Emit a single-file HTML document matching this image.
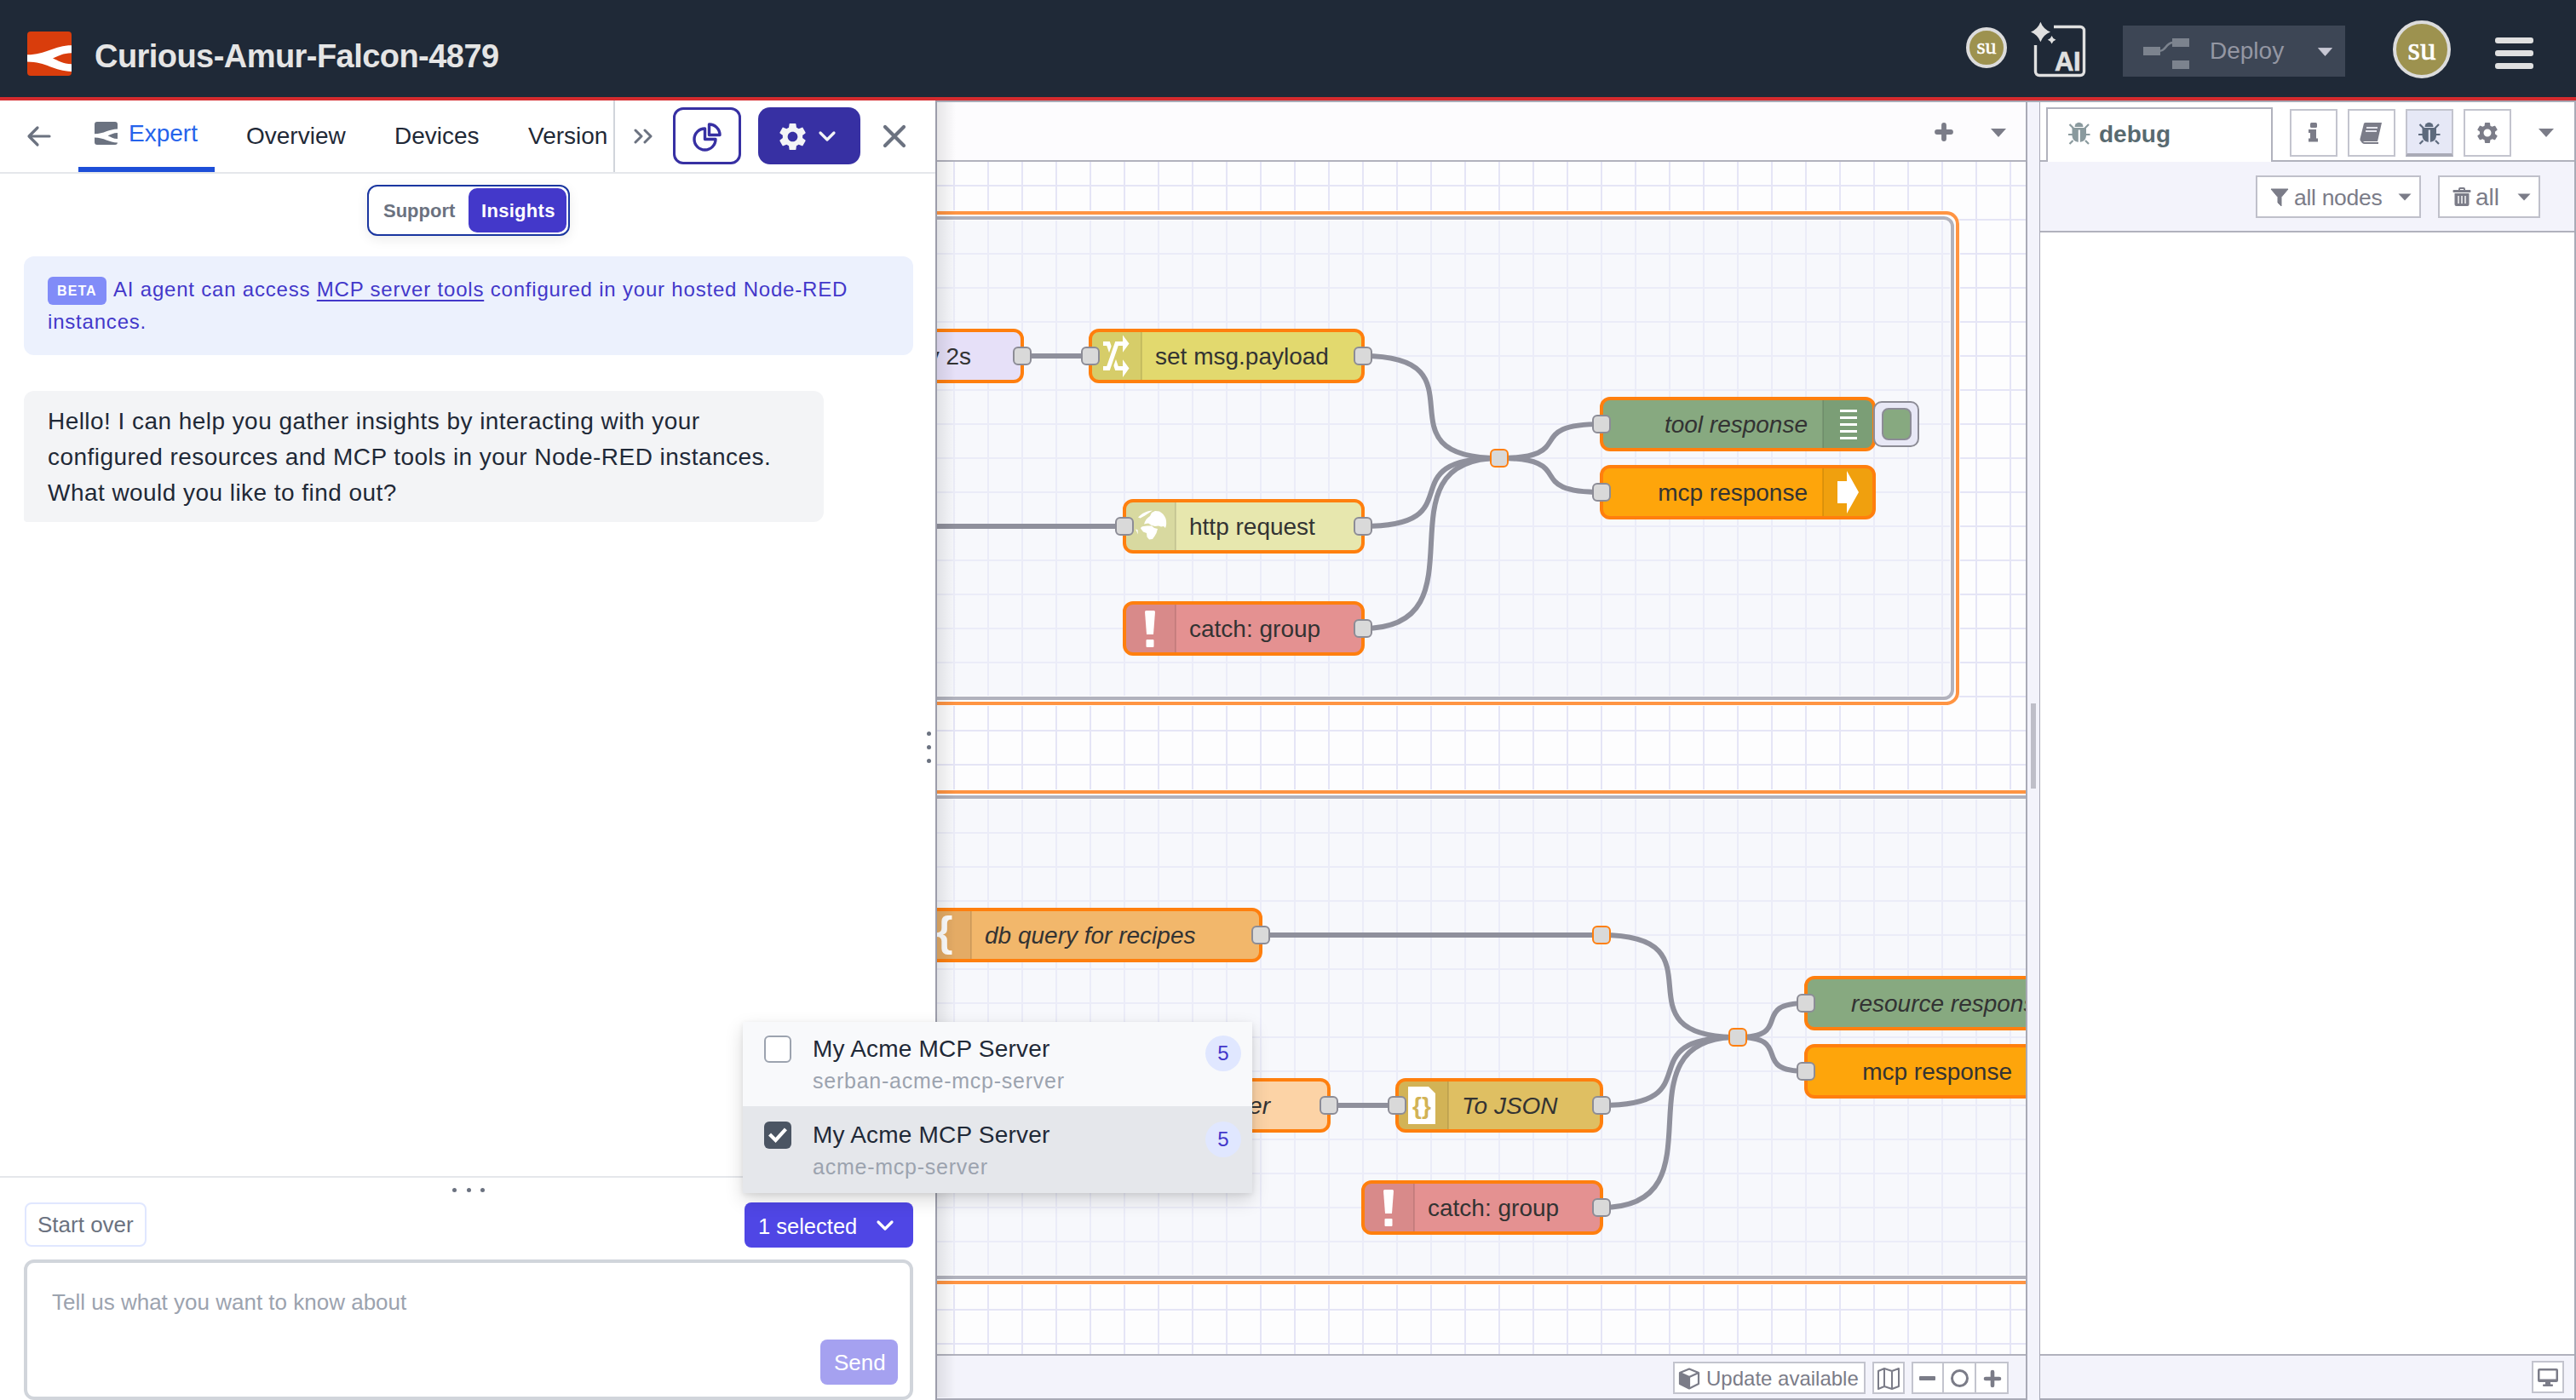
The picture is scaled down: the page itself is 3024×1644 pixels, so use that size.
<!DOCTYPE html>
<html><head><meta charset="utf-8">
<style>
.rbtn{width:56px;height:56px;background:#fff;border:2px solid #c3c4ce}

.port{fill:#d9d9d9;stroke:#8c8c96;stroke-width:2}

*{box-sizing:border-box;margin:0;padding:0}
html,body{width:3024px;height:1644px;overflow:hidden;background:#fff;font-family:"Liberation Sans",sans-serif}
.abs{position:absolute}
#hdr{position:absolute;left:0;top:0;width:3024px;height:114px;background:#1f2937}
#redl{position:absolute;left:0;top:114px;width:3024px;height:4px;background:#d52b2e}
#left{position:absolute;left:0;top:118px;width:1098px;height:1526px;background:#fff}
#leftb{position:absolute;left:1098px;top:118px;width:2px;height:1526px;background:#9c9daa}
.tab{position:absolute;top:142px;font-size:28px;color:#1f2937;line-height:40px;white-space:nowrap}
</style></head><body>
<!-- HEADER -->
<div id="hdr">
  <svg class="abs" style="left:32px;top:37px" width="52" height="52" viewBox="0 0 52 52">
    <rect width="52" height="52" rx="4" fill="#d93d0c"/>
    <path d="M0,27.3 C22,27.3 32,16.3 52,16.3 L52,25.2 C42,25.2 36,29 30,31.5 C36,34 42,38.3 52,38.3 L52,46.9 C32,46.9 22,35.6 0,35.6 Z" fill="#fff"/>
  </svg>
  <div class="abs" style="left:111px;top:36px;font-size:38px;font-weight:bold;color:#e5e5e5;letter-spacing:-0.55px;line-height:60px;white-space:nowrap">Curious-Amur-Falcon-4879</div>

  <div class="abs" style="left:2308px;top:32px;width:48px;height:48px;border-radius:50%;background:#9d924f;border:4px solid #dcdcdc"></div>
  <div class="abs" style="left:2308px;top:32px;width:48px;height:48px;text-align:center;font-family:'Liberation Serif',serif;font-size:26px;color:#fff;line-height:46px;-webkit-text-stroke:0.5px #fff">su</div>
  <svg class="abs" style="left:2380px;top:24px" width="72" height="70" viewBox="2380 24 72 70">
    <path d="M2411,31.5 H2442 A4.5,4.5 0 0 1 2446.5,36 V84 A4.5,4.5 0 0 1 2442,88.5 H2394 A4.5,4.5 0 0 1 2389.5,84 V53" fill="none" stroke="#e0e0e0" stroke-width="3.4"/>
    <path d="M2395.4,25.8 Q2398.6,34.3 2407,37.5 Q2398.6,40.7 2395.4,49.3 Q2392.2,40.7 2384,37.5 Q2392.2,34.3 2395.4,25.8 Z" fill="#e0e0e0"/>
    <path d="M2408.6,42 Q2409.8,45.6 2413.4,46.8 Q2409.8,48 2408.6,51.6 Q2407.4,48 2403.8,46.8 Q2407.4,45.6 2408.6,42 Z" fill="#e0e0e0"/>
    <text x="2412" y="83" font-family="Liberation Sans" font-weight="bold" font-size="31" fill="#e0e0e0" stroke="#e0e0e0" stroke-width="0.6" letter-spacing="-0.5">AI</text>
  </svg>
  <div class="abs" style="left:2492px;top:30px;width:261px;height:60px;background:#3d4655"></div>
  <svg class="abs" style="left:2510px;top:40px" width="66" height="46" viewBox="2510 40 66 46">
    <rect x="2516" y="55" width="20" height="10" fill="#7c838e"/>
    <rect x="2550" y="45" width="20" height="10" fill="#7c838e"/>
    <rect x="2550" y="71" width="20" height="10" fill="#7c838e"/>
    <path d="M2535,60 C2543,60 2542,50 2551,50" fill="none" stroke="#7c838e" stroke-width="2.6"/>
  </svg>
  <div class="abs" style="left:2594px;top:40px;font-size:28px;color:#9497a3;line-height:40px">Deploy</div>
  <svg class="abs" style="left:2721px;top:56px" width="17" height="10" viewBox="0 0 17 10"><path d="M0.5,0.5 H16.5 L8.5,9.5 Z" fill="#c8c8d4" stroke="#c8c8d4" stroke-width="0.8" stroke-linejoin="round"/></svg>
  <div class="abs" style="left:2809px;top:24px;width:68px;height:68px;border-radius:50%;background:#9d924f;border:4px solid #dcdcdc"></div>
  <div class="abs" style="left:2809px;top:24px;width:68px;height:68px;text-align:center;font-family:'Liberation Serif',serif;font-size:37px;color:#fff;line-height:68px;-webkit-text-stroke:0.7px #fff">su</div>
  <div class="abs" style="left:2929px;top:44px;width:45px;height:7px;border-radius:3px;background:#e0e0e0"></div>
  <div class="abs" style="left:2929px;top:59px;width:45px;height:7px;border-radius:3px;background:#e0e0e0"></div>
  <div class="abs" style="left:2929px;top:74px;width:45px;height:7px;border-radius:3px;background:#e0e0e0"></div>
</div>
<div id="redl"></div>


<!-- CANVAS -->
<div class="abs" style="left:1100px;top:118px;width:1279px;height:72px;background:#fdfcfe;border-bottom:2px solid #b1b2bd"></div>
<svg class="abs" style="left:2268px;top:141px" width="28" height="28" viewBox="0 0 28 28"><path d="M14,6 V22 M6,14 H22" stroke="#7b7c88" stroke-width="5.8" stroke-linecap="round"/></svg>
<svg class="abs" style="left:2336px;top:150px" width="20" height="12" viewBox="0 0 20 12"><path d="M1,1 H19 L10,11 Z" fill="#7b7c88"/></svg>
<div class="abs" style="left:1100px;top:190px;width:1279px;height:1400px;overflow:hidden">
<svg width="1279" height="1400" viewBox="1100 190 1279 1400" style="display:block">
<defs>
<pattern id="grid" patternUnits="userSpaceOnUse" x="1119" y="217" width="40" height="40">
<rect x="0" y="0" width="2" height="40" fill="#e5e5f6"/><rect x="0" y="0" width="40" height="2" fill="#e5e5f6"/>
</pattern>
<linearGradient id="lsh" x1="0" x2="1" y1="0" y2="0"><stop offset="0" stop-color="#000" stop-opacity="0.09"/><stop offset="1" stop-color="#000" stop-opacity="0"/></linearGradient>
</defs>
<rect x="1100" y="190" width="1279" height="1400" fill="#fdfdfe"/>
<rect x="1100" y="190" width="1279" height="1400" fill="url(#grid)"/>
<rect x="1000" y="256" width="1292" height="564" rx="10" fill="rgba(241,243,250,0.5)"/>
<rect x="1000" y="936" width="1500" height="564" rx="10" fill="rgba(241,243,250,0.5)"/>
<rect x="997" y="253" width="1298" height="570" rx="11.5" fill="none" stroke="#fdfdfe" stroke-width="12"/>
<rect x="997" y="933" width="1506" height="570" rx="11.5" fill="none" stroke="#fdfdfe" stroke-width="12"/>
<rect x="1000" y="256" width="1292" height="564" rx="10" fill="none" stroke="#b1b2bd" stroke-width="4"/>
<rect x="994" y="250" width="1304" height="576" rx="13" fill="none" stroke="#ff9442" stroke-width="4"/>
<rect x="1000" y="936" width="1500" height="564" rx="10" fill="none" stroke="#b1b2bd" stroke-width="4"/>
<rect x="994" y="930" width="1512" height="576" rx="13" fill="none" stroke="#ff9442" stroke-width="4"/>
<g fill="none" stroke="#8f909c" stroke-width="6">
<path d="M1200,418 C1260.0,418 1220.0,418 1280,418"/>
<path d="M1000,618 C1150.0,618 1170.0,618 1320,618"/>
<path d="M1600,418 C1750.0,418 1610.0,538 1760,538"/>
<path d="M1600,618 C1734.2,618 1625.8,538 1760,538"/>
<path d="M1600,738 C1750.0,738 1610.0,538 1760,538"/>
<path d="M1760,538 C1854.9,538 1785.1,498 1880,498"/>
<path d="M1760,538 C1854.9,538 1785.1,578 1880,578"/>
<path d="M1480,1098 C1630.0,1098 1730.0,1098 1880,1098"/>
<path d="M1880,1098 C2030.0,1098 1890.0,1218 2040,1218"/>
<path d="M1560,1298 C1620.0,1298 1580.0,1298 1640,1298"/>
<path d="M1880,1298 C2014.2,1298 1905.8,1218 2040,1218"/>
<path d="M1880,1418 C2030.0,1418 1890.0,1218 2040,1218"/>
<path d="M2040,1218 C2107.1,1218 2052.9,1178 2120,1178"/>
<path d="M2040,1218 C2107.1,1218 2052.9,1258 2120,1258"/>
</g>
<g font-family="Liberation Sans" font-size="28" fill="#333">
<rect x="1000" y="388" width="200" height="60" rx="10" fill="#e6e0f8"/>

<rect x="1000" y="388" width="200" height="60" rx="10" fill="none" stroke="#ff7f0e" stroke-width="4"/>
<text x="1140" y="428" text-anchor="end">delay 2s</text>
<rect class="port" x="1190" y="408" width="20" height="20" rx="5"/>
<rect x="1280" y="388" width="320" height="60" rx="10" fill="#e2d96e"/>
<path d="M1290,388 H1340 V448 H1290 A10,10 0 0 1 1280,438 V398 A10,10 0 0 1 1290,388 Z" fill="#d6cd69"/>
<rect x="1339" y="388" width="2" height="60" fill="rgba(0,0,0,0.1)"/>
<g fill="none" stroke-linejoin="miter" stroke-linecap="butt">
<path d="M1295,403.5 H1301 L1311,432.5 H1318.5" stroke="#fff" stroke-width="5"/>
<path d="M1302.5,428 L1309.5,408" stroke="#d6cd69" stroke-width="10"/>
<path d="M1295,432.5 H1301 L1311,403.5 H1318.5" stroke="#fff" stroke-width="5"/>
</g>
<path fill="#fff" d="M1318,393.4 L1325.5,403.5 L1318,413.7 Z M1318,422.3 L1325.5,432.5 L1318,442.9 Z"/>
<rect x="1280" y="388" width="320" height="60" rx="10" fill="none" stroke="#ff7f0e" stroke-width="4"/>
<text x="1356" y="428">set msg.payload</text>
<rect class="port" x="1270" y="408" width="20" height="20" rx="5"/>
<rect class="port" x="1590" y="408" width="20" height="20" rx="5"/>
<rect x="1320" y="588" width="280" height="60" rx="10" fill="#e7e7ae"/>
<path d="M1330,588 H1380 V648 H1330 A10,10 0 0 1 1320,638 V598 A10,10 0 0 1 1330,588 Z" fill="#d8d9a0"/>
<rect x="1379" y="588" width="2" height="60" fill="rgba(0,0,0,0.1)"/>
<g fill="#fff">
<path d="M1343,615.5 C1344,611 1347,608 1350,606 L1352,602 L1356,600 L1361,600.5 C1364,602 1367,605 1368.5,609 C1369.5,613 1369.5,617 1368,620 L1366,618 L1363,618.5 L1360,617.5 L1356,618 L1352,617 L1348,614.5 L1345,615 Z"/>
<path d="M1336,607.5 C1340,603 1346,600 1353,599.5 L1350,601.5 L1344,605.5 L1338.5,608.5 Z"/>
<path d="M1339,620.5 C1339.5,617.5 1344,617.5 1352,617.5 L1355,620 L1359,621 L1357.5,626 L1355.5,629.5 L1353,633 L1349,633.5 L1346.5,630.5 L1346,626 L1342,624.5 Z"/>
<path d="M1333,621.5 L1335.5,622 L1336,627.5 Z"/>
</g>
<rect x="1320" y="588" width="280" height="60" rx="10" fill="none" stroke="#ff7f0e" stroke-width="4"/>
<text x="1396" y="628">http request</text>
<rect class="port" x="1310" y="608" width="20" height="20" rx="5"/>
<rect class="port" x="1590" y="608" width="20" height="20" rx="5"/>
<rect x="1320" y="708" width="280" height="60" rx="10" fill="#e49191"/>
<path d="M1330,708 H1380 V768 H1330 A10,10 0 0 1 1320,758 V718 A10,10 0 0 1 1330,708 Z" fill="#d88a8a"/>
<rect x="1379" y="708" width="2" height="60" fill="rgba(0,0,0,0.1)"/>
<path fill="#fff" d="M1344,718.5 Q1344,717 1345.5,717 H1354.5 Q1356,717 1356,718.5 L1354,745 H1346 Z"/><rect x="1345.5" y="751" width="9" height="9" rx="1" fill="#fff"/>
<rect x="1320" y="708" width="280" height="60" rx="10" fill="none" stroke="#ff7f0e" stroke-width="4"/>
<text x="1396" y="748">catch: group</text>
<rect class="port" x="1590" y="728" width="20" height="20" rx="5"/>
<rect x="1880" y="468" width="320" height="60" rx="10" fill="#87a980"/>
<path d="M2190,468 H2140 V528 H2190 A10,10 0 0 0 2200,518 V478 A10,10 0 0 0 2190,468 Z" fill="#7b9e76"/>
<rect x="2139" y="468" width="2" height="60" fill="rgba(0,0,0,0.1)"/>
<rect x="2160" y="481" width="20" height="3" fill="#fff"/><rect x="2160" y="489" width="20" height="3" fill="#fff"/><rect x="2160" y="497" width="20" height="3" fill="#fff"/><rect x="2160" y="505" width="20" height="3" fill="#fff"/><rect x="2160" y="513" width="20" height="3" fill="#fff"/>
<rect x="1880" y="468" width="320" height="60" rx="10" fill="none" stroke="#ff7f0e" stroke-width="4"/>
<text x="2122" y="508" text-anchor="end" font-style="italic">tool response</text>
<rect class="port" x="1870" y="488" width="20" height="20" rx="5"/>
<rect x="1880" y="548" width="320" height="60" rx="10" fill="#fea50b"/>
<path d="M2190,548 H2140 V608 H2190 A10,10 0 0 0 2200,598 V558 A10,10 0 0 0 2190,548 Z" fill="#f0a00e"/>
<rect x="2139" y="548" width="2" height="60" fill="rgba(0,0,0,0.1)"/>
<path fill="#fff" d="M2157,565 H2168 V553 L2182,578 L2168,603 V591 H2157 Z"/>
<rect x="1880" y="548" width="320" height="60" rx="10" fill="none" stroke="#ff7f0e" stroke-width="4"/>
<text x="2122" y="588" text-anchor="end">mcp response</text>
<rect class="port" x="1870" y="568" width="20" height="20" rx="5"/>
<rect x="1080" y="1068" width="400" height="60" rx="10" fill="#f2b76b"/>
<path d="M1090,1068 H1140 V1128 H1090 A10,10 0 0 1 1080,1118 V1078 A10,10 0 0 1 1090,1068 Z" fill="#e4ab65"/>
<rect x="1139" y="1068" width="2" height="60" fill="rgba(0,0,0,0.1)"/>
<text x="1099" y="1111" font-size="50" font-weight="bold" fill="#fff" font-family="Liberation Sans">{</text>
<rect x="1080" y="1068" width="400" height="60" rx="10" fill="none" stroke="#ff7f0e" stroke-width="4"/>
<text x="1156" y="1108" font-style="italic">db query for recipes</text>
<rect class="port" x="1470" y="1088" width="20" height="20" rx="5"/>
<rect x="1300" y="1268" width="260" height="60" rx="10" fill="#fcd3a6"/>

<rect x="1300" y="1268" width="260" height="60" rx="10" fill="none" stroke="#ff7f0e" stroke-width="4"/>
<text x="1491" y="1308" text-anchor="end" font-style="italic">helper</text>
<rect class="port" x="1550" y="1288" width="20" height="20" rx="5"/>
<rect x="1640" y="1268" width="240" height="60" rx="10" fill="#dfbf62"/>
<path d="M1650,1268 H1700 V1328 H1650 A10,10 0 0 1 1640,1318 V1278 A10,10 0 0 1 1650,1268 Z" fill="#d2b356"/>
<rect x="1699" y="1268" width="2" height="60" fill="rgba(0,0,0,0.1)"/>
<path d="M1653,1276 H1677 L1685,1284 V1320 H1653 Z" fill="#fff"/><text x="1669" y="1308" font-size="28" font-weight="bold" fill="#d2b356" text-anchor="middle" font-family="Liberation Sans">{}</text>
<rect x="1640" y="1268" width="240" height="60" rx="10" fill="none" stroke="#ff7f0e" stroke-width="4"/>
<text x="1716" y="1308" font-style="italic">To JSON</text>
<rect class="port" x="1630" y="1288" width="20" height="20" rx="5"/>
<rect class="port" x="1870" y="1288" width="20" height="20" rx="5"/>
<rect x="1600" y="1388" width="280" height="60" rx="10" fill="#e49191"/>
<path d="M1610,1388 H1660 V1448 H1610 A10,10 0 0 1 1600,1438 V1398 A10,10 0 0 1 1610,1388 Z" fill="#d88a8a"/>
<rect x="1659" y="1388" width="2" height="60" fill="rgba(0,0,0,0.1)"/>
<path fill="#fff" d="M1624,1398.5 Q1624,1397 1625.5,1397 H1634.5 Q1636,1397 1636,1398.5 L1634,1425 H1626 Z"/><rect x="1625.5" y="1431" width="9" height="9" rx="1" fill="#fff"/>
<rect x="1600" y="1388" width="280" height="60" rx="10" fill="none" stroke="#ff7f0e" stroke-width="4"/>
<text x="1676" y="1428">catch: group</text>
<rect class="port" x="1870" y="1408" width="20" height="20" rx="5"/>
<rect x="2120" y="1148" width="363" height="60" rx="10" fill="#87a980"/>
<rect x="2120" y="1148" width="363" height="60" rx="10" fill="none" stroke="#ff7f0e" stroke-width="4"/>
<text x="2405" y="1188" text-anchor="end" font-style="italic">resource response</text>
<rect class="port" x="2110" y="1168" width="20" height="20" rx="5"/>
<rect x="2120" y="1228" width="320" height="60" rx="10" fill="#fea50b"/>
<path d="M2430,1228 H2380 V1288 H2430 A10,10 0 0 0 2440,1278 V1238 A10,10 0 0 0 2430,1228 Z" fill="#f0a00e"/>
<rect x="2379" y="1228" width="2" height="60" fill="rgba(0,0,0,0.1)"/>

<rect x="2120" y="1228" width="320" height="60" rx="10" fill="none" stroke="#ff7f0e" stroke-width="4"/>
<text x="2362" y="1268" text-anchor="end">mcp response</text>
<rect class="port" x="2110" y="1248" width="20" height="20" rx="5"/>
</g>
<rect class="port" x="1750" y="528" width="20" height="20" rx="5" style="stroke:#ff7f0e"/>
<rect class="port" x="1870" y="1088" width="20" height="20" rx="5" style="stroke:#ff7f0e"/>
<rect class="port" x="2030" y="1208" width="20" height="20" rx="5" style="stroke:#ff7f0e"/>
<rect x="2200" y="472" width="52" height="52" rx="9" fill="#e8e8f6" stroke="#8c8c96" stroke-width="2"/>
<rect x="2210" y="480" width="33" height="36" rx="7" fill="#87a980" stroke="#8c8c96" stroke-width="2"/>

</svg>
</div>
<div class="abs" style="left:1100px;top:1590px;width:1279px;height:54px;background:#f3f3fb;border-top:2px solid #b1b2bd;border-bottom:2px solid #a9aab6"></div>
<div class="abs" style="left:2378px;top:118px;width:18px;height:1526px;background:#f3f3fb;border-left:2px solid #a9aab6;border-right:2px solid #a9aab6"></div>

<div class="abs" style="left:2384px;top:826px;width:6px;height:100px;background:#bebec8"></div>


<!-- RIGHT PANEL -->
<div class="abs" style="left:2395px;top:118px;width:629px;height:1526px;background:#fff;border-right:2px solid #a9aab6"></div>
<div class="abs" style="left:2395px;top:188px;width:627px;height:85px;background:#f3f3fb;border-top:2px solid #b1b2bd;border-bottom:2px solid #b1b2bd"></div>
<div class="abs" style="left:2402px;top:126px;width:266px;height:64px;background:#fff;border:2px solid #b1b2bd;border-bottom:none"></div>
<svg class="abs" style="left:2426px;top:142px" width="30" height="28" viewBox="0 0 30 28">
  <path d="M9.5,7 A5,5.2 0 0 1 19.5,7 Z" fill="#8a9a9e"/>
  <path d="M6.5,8 H23 V17 C23,22 19.5,24.8 14.75,24.8 C10,24.8 6.5,22 6.5,17 Z" fill="#8a9a9e"/>
  <rect x="13.8" y="10.5" width="2" height="14.5" fill="#fff"/>
  <path d="M3.5,4 L8,8.5 M26,4 L21.5,8.5 M2,16 H7 M22.5,16 H27.5 M3.5,27 L7.5,23 M26,27 L22,23" stroke="#8a9a9e" stroke-width="2.2" fill="none"/>
</svg>
<div class="abs" style="left:2464px;top:138px;font-size:28px;font-weight:bold;color:#586a70;line-height:40px">debug</div>
<div class="abs rbtn" style="left:2688px;top:128px"></div>
<div class="abs rbtn" style="left:2756px;top:128px"></div>
<div class="abs rbtn" style="left:2824px;top:128px;background:#e6e8f6;border-bottom:4px solid #a9aab6"></div>
<div class="abs rbtn" style="left:2892px;top:128px"></div>
<svg class="abs" style="left:2706px;top:143px" width="20" height="25" viewBox="0 0 20 25"><g fill="#7b7c88"><rect x="6" y="1" width="8" height="6" rx="1.5"/><path d="M4,9 H13 V19.5 H15 V23.5 H4 V19.5 H6 V13 H4 Z"/></g></svg>
<svg class="abs" style="left:2768px;top:140px" width="32" height="32" viewBox="0 0 32 32"><path d="M9,4 H28 L23,26 H5 Q2,26 2.5,23 L7,5 Q7.5,4 9,4 Z" fill="#7b7c88"/><path d="M4,24 Q5,28 8,28 H24" fill="none" stroke="#7b7c88" stroke-width="2.2"/><path d="M10,10 H23 M9,14 H22" stroke="#e6e6ee" stroke-width="2"/></svg>
<svg class="abs" style="left:2837px;top:142px" width="30" height="28" viewBox="0 0 30 28">
  <path d="M9.5,7 A5,5.2 0 0 1 19.5,7 Z" fill="#5d6a7d"/>
  <path d="M6.5,8 H23 V17 C23,22 19.5,24.8 14.75,24.8 C10,24.8 6.5,22 6.5,17 Z" fill="#5d6a7d"/>
  <rect x="13.8" y="10.5" width="2" height="14.5" fill="#e6e8f6"/>
  <path d="M3.5,4 L8,8.5 M26,4 L21.5,8.5 M2,16 H7 M22.5,16 H27.5 M3.5,27 L7.5,23 M26,27 L22,23" stroke="#5d6a7d" stroke-width="2.2" fill="none"/>
</svg>
<svg class="abs" style="left:2905px;top:141px" width="30" height="30" viewBox="0 0 24 24"><path fill="#7b7c88" d="M19.14,12.94c0.04-0.3,0.06-0.61,0.06-0.94c0-0.32-0.02-0.64-0.07-0.94l2.03-1.58c0.18-0.14,0.23-0.41,0.12-0.61 l-1.92-3.32c-0.12-0.22-0.37-0.29-0.59-0.22l-2.39,0.96c-0.5-0.38-1.030-0.7-1.62-0.94L14.4,2.81c-0.04-0.24-0.24-0.41-0.48-0.41 h-3.84c-0.24,0-0.43,0.17-0.47,0.41L9.25,5.35C8.66,5.59,8.12,5.92,7.63,6.29L5.24,5.33c-0.22-0.08-0.47,0-0.59,0.22L2.74,8.87 C2.62,9.08,2.66,9.34,2.86,9.48l2.03,1.58C4.84,11.36,4.8,11.690,4.8,12s0.02,0.64,0.07,0.94l-2.03,1.58 c-0.18,0.14-0.23,0.41-0.12,0.61l1.92,3.32c0.12,0.22,0.37,0.29,0.59,0.22l2.39-0.96c0.5,0.38,1.03,0.7,1.62,0.94l0.36,2.54 c0.05,0.24,0.24,0.41,0.48,0.41h3.84c0.24,0,0.44-0.17,0.47-0.41l0.36-2.54c0.59-0.24,1.13-0.56,1.62-0.94l2.39,0.96 c0.22,0.08,0.47,0,0.59-0.22l1.92-3.32c0.12-0.22,0.07-0.47-0.12-0.61L19.14,12.94z M12,15.6c-1.98,0-3.6-1.62-3.6-3.6 s1.62-3.6,3.6-3.6s3.6,1.62,3.6,3.6S13.98,15.6,12,15.6z"/></svg>
<svg class="abs" style="left:2979px;top:150px" width="20" height="12" viewBox="0 0 20 12"><path d="M1,1 H19 L10,11 Z" fill="#7b7c88"/></svg>
<div class="abs" style="left:2648px;top:206px;width:194px;height:50px;background:#fff;border:2px solid #bfc0ca"></div>
<svg class="abs" style="left:2665px;top:221px" width="22" height="22" viewBox="0 0 22 22"><path d="M1,1 H21 L13,10.5 V21 L9,17 V10.5 Z" fill="#7b7c88" stroke="#7b7c88" stroke-width="1" stroke-linejoin="round"/></svg>
<div class="abs" style="left:2693px;top:212px;font-size:26.5px;letter-spacing:-0.3px;color:#7b7c88;line-height:40px">all nodes</div>
<svg class="abs" style="left:2815px;top:227px" width="16" height="10" viewBox="0 0 16 10"><path d="M0.5,0.5 H15.5 L8,8.5 Z" fill="#7b7c88"/></svg>
<div class="abs" style="left:2862px;top:206px;width:120px;height:50px;background:#fff;border:2px solid #bfc0ca"></div>
<svg class="abs" style="left:2879px;top:219px" width="22" height="24" viewBox="0 0 22 24"><g fill="#7b7c88"><path d="M7,3 Q7,1 9,1 H13 Q15,1 15,3 V4 H13 V3 H9 V4 H7 Z"/><rect x="0.5" y="4" width="21" height="3" rx="1"/><path d="M2.5,8 H19.5 V21 Q19.5,23 17.5,23 H4.5 Q2.5,23 2.5,21 Z"/></g><path d="M7,11 V20 M11,11 V20 M15,11 V20" stroke="#fff" stroke-width="1.4"/></svg>
<div class="abs" style="left:2906px;top:212px;font-size:28px;color:#7b7c88;line-height:40px">all</div>
<svg class="abs" style="left:2955px;top:227px" width="16" height="10" viewBox="0 0 16 10"><path d="M0.5,0.5 H15.5 L8,8.5 Z" fill="#7b7c88"/></svg>
<div class="abs" style="left:2395px;top:1590px;width:627px;height:54px;background:#f3f3fb;border-top:2px solid #b1b2bd;border-bottom:2px solid #a9aab6"></div>
<div class="abs" style="left:2972px;top:1598px;width:38px;height:38px;background:#fff;border:2px solid #c3c4ce"></div>
<svg class="abs" style="left:2978px;top:1604px" width="26" height="26" viewBox="0 0 26 26"><rect x="1" y="3" width="24" height="16" rx="2" fill="#7b7c88"/><rect x="3.5" y="5.5" width="19" height="10" fill="#fff"/><rect x="10" y="19" width="6" height="3" fill="#7b7c88"/><rect x="7" y="21.5" width="12" height="2.5" rx="1" fill="#7b7c88"/></svg>
<!-- canvas footer buttons -->
<div class="abs" style="left:1964px;top:1599px;width:226px;height:38px;background:#fff;border:2px solid #c3c4ce"></div>
<svg class="abs" style="left:1970px;top:1606px" width="26" height="26" viewBox="0 0 26 26"><path d="M13,1.5 L24,6 V19 L13,24.5 L2,19 V6 Z" fill="none" stroke="#7b7c88" stroke-width="2.2" stroke-linejoin="round"/><path d="M2,6 L13,11 L24,6 M13,11 V24.5" fill="none" stroke="#7b7c88" stroke-width="2.2"/><path d="M2,6 L13,11 V24.5 L2,19 Z" fill="#7b7c88"/></svg>
<div class="abs" style="left:2003px;top:1601px;font-size:24px;color:#7b7c88;line-height:36px;white-space:nowrap">Update available</div>
<div class="abs" style="left:2198px;top:1599px;width:38px;height:38px;background:#fff;border:2px solid #c3c4ce"></div>
<svg class="abs" style="left:2201px;top:1605px" width="32" height="28" viewBox="0 0 32 28"><path d="M4,5 L11,2 L20,5 L28,2 V23 L20,26 L11,23 L4,26 Z M11,2 V23 M20,5 V26" fill="none" stroke="#7b7c88" stroke-width="2" stroke-linejoin="round"/></svg>
<div class="abs" style="left:2244px;top:1599px;width:114px;height:38px;background:#fff;border:2px solid #c3c4ce"></div>
<div class="abs" style="left:2280px;top:1599px;width:2px;height:38px;background:#c3c4ce"></div>
<div class="abs" style="left:2318px;top:1599px;width:2px;height:38px;background:#c3c4ce"></div>
<div class="abs" style="left:2253px;top:1616px;width:19px;height:5px;border-radius:1px;background:#7b7c88"></div>
<div class="abs" style="left:2290px;top:1608px;width:21px;height:21px;border-radius:50%;border:3px solid #7b7c88"></div>
<svg class="abs" style="left:2328px;top:1608px" width="22" height="22" viewBox="0 0 22 22"><path d="M11,3 V19 M3,11 H19" stroke="#7b7c88" stroke-width="4.6" stroke-linecap="round"/></svg>

<div class="abs" style="left:1100px;top:118px;width:1924px;height:2px;background:#a9aab6"></div>
<div class="abs" style="left:1100px;top:120px;width:22px;height:1521px;background:linear-gradient(to right,rgba(0,0,0,0.09),rgba(0,0,0,0))"></div>
<!-- LEFT PANEL -->
<div id="left">
</div>
<div class="abs" style="left:0;top:202px;width:1098px;height:2px;background:#e5e7eb"></div>
<!-- back arrow -->
<svg class="abs" style="left:30px;top:144px" width="32" height="32" viewBox="0 0 32 32">
  <path d="M28,16 H5 M14,6 L4,16 L14,26" fill="none" stroke="#6b7280" stroke-width="3.2" stroke-linecap="round" stroke-linejoin="round"/>
</svg>
<!-- expert icon -->
<svg class="abs" style="left:111px;top:143px" width="27" height="27" viewBox="0 0 27 27">
  <rect width="27" height="27" rx="3" fill="#6b7280"/>
  <path d="M0,14.2 C11,14.2 17,8.5 27,8.5 L27,13.1 C22,13.1 19,15 15.6,16.4 C19,17.7 22,19.9 27,19.9 L27,24.4 C17,24.4 11,18.5 0,18.5 Z" fill="#fff"/>
</svg>
<div class="tab" style="left:151px;top:137px;color:#2563eb">Expert</div>
<div class="abs" style="left:92px;top:196px;width:160px;height:6px;background:#1d4ed8"></div>
<div class="tab" style="left:289px;top:140px">Overview</div>
<div class="tab" style="left:463px;top:140px">Devices</div>
<div class="tab" style="left:620px;top:140px">Version</div>
<div class="abs" style="left:720px;top:118px;width:2px;height:84px;background:#d1d5db"></div>
<svg class="abs" style="left:743px;top:148px" width="26" height="24" viewBox="0 0 26 24">
  <path d="M3,5 L10,12 L3,19 M14,5 L21,12 L14,19" fill="none" stroke="#6b7280" stroke-width="3" stroke-linecap="round" stroke-linejoin="round"/>
</svg>
<div class="abs" style="left:790px;top:126px;width:80px;height:67px;border:3px solid #3730a3;border-radius:12px;background:#fff"></div>
<svg class="abs" style="left:810px;top:141px" width="40" height="40" viewBox="0 0 24 24" fill="none" stroke="#3730a3" stroke-width="2.05" stroke-linecap="round" stroke-linejoin="round"><path d="M10.5 6a7.5 7.5 0 1 0 7.5 7.5h-7.5V6Z"/><path d="M13.5 10.5H21A7.5 7.5 0 0 0 13.5 3v7.5Z"/></svg>
<div class="abs" style="left:890px;top:126px;width:120px;height:67px;border-radius:14px;background:#3730a3"></div>
<svg class="abs" style="left:911px;top:141px" width="39" height="39" viewBox="0 0 24 24">
  <path fill="#f3f4f6" d="M19.14,12.94c0.04-0.3,0.06-0.61,0.06-0.94c0-0.32-0.02-0.64-0.07-0.94l2.03-1.58c0.18-0.14,0.23-0.41,0.12-0.61 l-1.92-3.32c-0.12-0.22-0.37-0.29-0.59-0.22l-2.39,0.96c-0.5-0.38-1.03-0.7-1.62-0.94L14.4,2.81c-0.04-0.24-0.24-0.41-0.48-0.41 h-3.84c-0.24,0-0.43,0.17-0.47,0.41L9.25,5.35C8.66,5.59,8.12,5.92,7.63,6.29L5.24,5.33c-0.22-0.08-0.47,0-0.59,0.22L2.74,8.87 C2.62,9.08,2.66,9.34,2.86,9.48l2.03,1.58C4.84,11.36,4.8,11.69,4.8,12s0.02,0.64,0.07,0.94l-2.03,1.58 c-0.18,0.14-0.23,0.41-0.12,0.61l1.92,3.32c0.12,0.22,0.37,0.29,0.59,0.22l2.39-0.96c0.5,0.38,1.03,0.7,1.62,0.94l0.36,2.54 c0.05,0.24,0.24,0.41,0.48,0.41h3.84c0.24,0,0.44-0.17,0.47-0.41l0.36-2.54c0.59-0.24,1.13-0.56,1.62-0.94l2.39,0.96 c0.22,0.08,0.47,0,0.59-0.22l1.92-3.32c0.12-0.22,0.07-0.47-0.12-0.61L19.14,12.94z M12,15.6c-1.98,0-3.6-1.62-3.6-3.6 s1.62-3.6,3.6-3.6s3.6,1.62,3.6,3.6S13.98,15.6,12,15.6z"/>
</svg>
<svg class="abs" style="left:960px;top:150px" width="22" height="20" viewBox="0 0 22 20">
  <path d="M3,6 L11,14 L19,6" fill="none" stroke="#f3f4f6" stroke-width="3.2" stroke-linecap="round" stroke-linejoin="round"/>
</svg>
<svg class="abs" style="left:1034px;top:144px" width="32" height="32" viewBox="0 0 32 32">
  <path d="M5,5 L27,27 M27,5 L5,27" fill="none" stroke="#6b7280" stroke-width="4.2" stroke-linecap="round"/>
</svg>
<!-- toggle -->
<div class="abs" style="left:431px;top:217px;width:238px;height:60px;border:2.4px solid #1a36a0;border-radius:12px;background:#fff;box-shadow:0 4px 14px rgba(0,0,0,0.08)"></div>
<div class="abs" style="left:550px;top:221px;width:115px;height:52px;border-radius:10px;background:#4338ca"></div>
<div class="abs" style="left:450px;top:232px;font-size:22px;font-weight:bold;color:#6b7280;line-height:32px">Support</div>
<div class="abs" style="left:565px;top:232px;letter-spacing:0.3px;font-size:22px;font-weight:bold;color:#fff;line-height:32px">Insights</div>
<!-- beta box -->
<div class="abs" style="left:28px;top:301px;width:1044px;height:116px;border-radius:12px;background:#ecf1fd"></div>
<div class="abs" style="left:56px;top:325px;width:69px;height:33px;border-radius:6px;background:#818cf8"></div>
<div class="abs" style="left:67px;top:327px;font-size:16px;font-weight:bold;color:#fff;letter-spacing:1.1px;line-height:30px">BETA</div>
<div class="abs" style="left:133px;top:322px;font-size:24px;color:#4338ca;letter-spacing:0.8px;line-height:36px;white-space:nowrap">AI agent can access <span style="text-decoration:underline;text-underline-offset:4px;text-decoration-thickness:2px">MCP server tools</span> configured in your hosted Node-RED</div>
<div class="abs" style="left:56px;top:360px;font-size:24px;color:#4338ca;letter-spacing:0.8px;line-height:36px;white-space:nowrap">instances.</div>
<!-- chat bubble -->
<div class="abs" style="left:28px;top:459px;width:939px;height:154px;border-radius:12px 12px 12px 4px;background:#f3f4f6"></div>
<div class="abs" style="left:56px;top:474px;font-size:28px;color:#1f2937;letter-spacing:0.45px;line-height:42px;white-space:nowrap">Hello! I can help you gather insights by interacting with your<br>configured resources and MCP tools in your Node-RED instances.<br>What would you like to find out?</div>
<!-- bottom area -->
<div class="abs" style="left:0;top:1381px;width:1098px;height:2px;background:#e5e7eb"></div>
<div class="abs" style="left:531px;top:1395px;width:5px;height:5px;border-radius:50%;background:#6b7280"></div>
<div class="abs" style="left:548px;top:1395px;width:5px;height:5px;border-radius:50%;background:#6b7280"></div>
<div class="abs" style="left:564px;top:1395px;width:5px;height:5px;border-radius:50%;background:#6b7280"></div>
<div class="abs" style="left:29px;top:1412px;width:143px;height:52px;border:2px solid #e0e7ff;border-radius:8px;background:#fff"></div>
<div class="abs" style="left:44px;top:1420px;font-size:26px;color:#6b7280;line-height:36px;white-space:nowrap">Start over</div>
<div class="abs" style="left:874px;top:1412px;width:198px;height:53px;border-radius:8px;background:#4f46e5"></div>
<div class="abs" style="left:890px;top:1422px;font-size:25.5px;color:#fff;line-height:36px;white-space:nowrap">1 selected</div>
<svg class="abs" style="left:1027px;top:1428px" width="24" height="22" viewBox="0 0 24 22">
  <path d="M4,7 L12,15 L20,7" fill="none" stroke="#fff" stroke-width="3.2" stroke-linecap="round" stroke-linejoin="round"/>
</svg>
<div class="abs" style="left:28px;top:1479px;width:1044px;height:165px;border:4px solid #d1d5db;border-radius:12px;background:#fff"></div>
<div class="abs" style="left:61px;top:1511px;font-size:26px;color:#9ca3af;line-height:36px;white-space:nowrap">Tell us what you want to know about</div>
<div class="abs" style="left:963px;top:1573px;width:91px;height:53px;border-radius:8px;background:#a5a1f0"></div>
<div class="abs" style="left:979px;top:1582px;font-size:26px;color:#fff;line-height:36px;white-space:nowrap">Send</div>

<div id="leftb"></div>

<div class="abs" style="left:1088px;top:859px;width:5px;height:5px;border-radius:50%;background:#6b7280"></div>
<div class="abs" style="left:1088px;top:875px;width:5px;height:5px;border-radius:50%;background:#6b7280"></div>
<div class="abs" style="left:1088px;top:891px;width:5px;height:5px;border-radius:50%;background:#6b7280"></div>
<!-- DROPDOWN -->
<div class="abs" style="left:872px;top:1200px;width:598px;height:201px;background:#e5e7eb;box-shadow:0 8px 20px rgba(0,0,0,0.15),0 2px 6px rgba(0,0,0,0.08)"></div>
<div class="abs" style="left:872px;top:1200px;width:598px;height:99px;background:#f8f9fb"></div>
<div class="abs" style="left:897px;top:1216px;width:32px;height:32px;border:2px solid #9ca3af;border-radius:6px;background:#fff"></div>
<div class="abs" style="left:897px;top:1317px;width:32px;height:32px;border-radius:6px;background:#4b5563"></div>
<svg class="abs" style="left:897px;top:1317px" width="32" height="32" viewBox="0 0 32 32"><path d="M8,16.5 L13.5,22 L24,10.5" fill="none" stroke="#fff" stroke-width="4.2" stroke-linecap="square"/></svg>
<div class="abs" style="left:954px;top:1212px;font-size:28px;color:#1f2937;letter-spacing:0.2px;line-height:40px;white-space:nowrap">My Acme MCP Server</div>
<div class="abs" style="left:954px;top:1251px;font-size:25px;color:#9ca3af;letter-spacing:0.75px;line-height:36px;white-space:nowrap">serban-acme-mcp-server</div>
<div class="abs" style="left:954px;top:1313px;font-size:28px;color:#1f2937;letter-spacing:0.2px;line-height:40px;white-space:nowrap">My Acme MCP Server</div>
<div class="abs" style="left:954px;top:1352px;font-size:25px;color:#9ca3af;letter-spacing:0.75px;line-height:36px;white-space:nowrap">acme-mcp-server</div>
<div class="abs" style="left:1415px;top:1216px;width:42px;height:42px;border-radius:50%;background:#e0e7ff;color:#4338ca;font-size:24px;text-align:center;line-height:42px">5</div>
<div class="abs" style="left:1415px;top:1317px;width:42px;height:42px;border-radius:50%;background:#e0e7ff;color:#4338ca;font-size:24px;text-align:center;line-height:42px">5</div>
</body></html>
